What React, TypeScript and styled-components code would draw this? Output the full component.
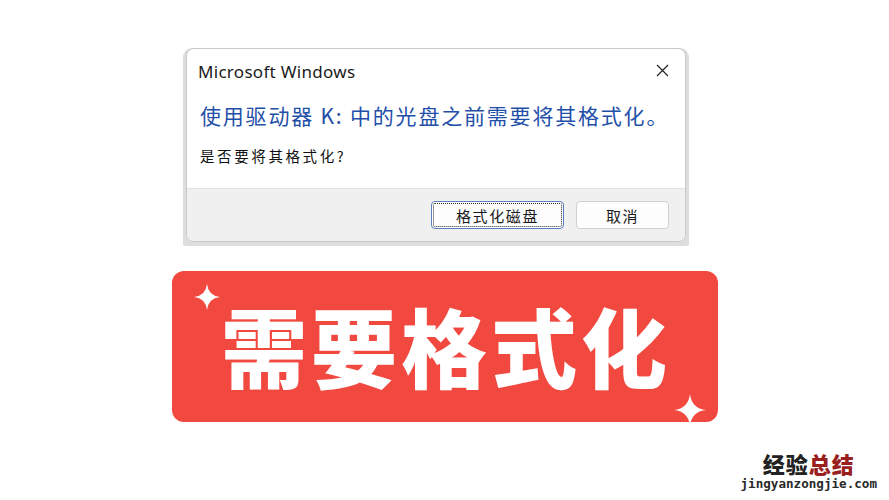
import styled, { createGlobalStyle } from "styled-components";

const GlobalStyle = createGlobalStyle`
  html, body {
    margin: 0;
    padding: 0;
    background: #ffffff;
  }
`;

const CJK = `"Noto Sans CJK SC", "Noto Sans", sans-serif`;

const StyledPage = styled.div`
  position: relative;
  width: 889px;
  height: 500px;
  overflow: hidden;
  display: flex;
  flex-direction: column;
  align-items: flex-start;
  padding-top: 48px;
  box-sizing: border-box;
`;

const StyledShot = styled.div`
  margin-left: 183px;
  padding: 0 3px 4px 3px;
  background: #dedede;
  border-radius: 9px 9px 2px 2px;
`;

const StyledDialog = styled.div`
  width: 498px;
  height: 192px;
  display: flex;
  flex-direction: column;
  background: #ffffff;
  border: 1px solid #c9c9c9;
  border-radius: 8px;
  overflow: hidden;
`;

const StyledTitleBar = styled.div`
  display: flex;
  align-items: center;
  justify-content: space-between;
  height: 42px;
  padding: 0 16px 0 11px;
`;

const StyledTitle = styled.span`
  font-family: "Noto Sans", "Open Sans", sans-serif;
  font-size: 17px;
  letter-spacing: 0.3px;
  color: #1b1b1b;
  padding-top: 2px;
`;

const StyledBody = styled.div`
  flex: 1;
  display: flex;
  flex-direction: column;
  padding: 0 0 0 13px;
`;

const StyledHeadline = styled.div`
  margin-top: 11px;
  font-family: ${CJK};
  font-size: 21px;
  letter-spacing: 1.8px;
  white-space: nowrap;
  color: #1f4fa8;
  line-height: 26px;
`;

const StyledQuestion = styled.div`
  margin-top: 18px;
  font-family: ${CJK};
  font-size: 14.5px;
  letter-spacing: 2.6px;
  color: #111111;
  line-height: 20px;
`;

const StyledFooter = styled.div`
  height: 53px;
  display: flex;
  align-items: center;
  justify-content: flex-end;
  gap: 12px;
  padding-right: 16px;
  background: #f0f0f0;
  border-top: 1px solid #e3e3e3;
  box-sizing: border-box;
`;

const StyledButton = styled.button<{ $focused?: boolean; $width: number }>`
  width: ${(p) => p.$width}px;
  height: 28px;
  box-sizing: border-box;
  font-family: ${CJK};
  font-size: 15px;
  letter-spacing: 1.6px;
  color: #1a1a1a;
  background: #fdfdfd;
  border: 1px solid ${(p) => (p.$focused ? "#5b7fc0" : "#d0d0d0")};
  border-radius: 4px;
  outline: ${(p) => (p.$focused ? "1px dotted #333" : "none")};
  outline-offset: -3px;
  padding: 0;
`;

const StyledBanner = styled.div`
  position: relative;
  margin: 25px 0 0 172px;
  width: 546px;
  height: 151px;
  display: flex;
  align-items: center;
  justify-content: center;
  background: #f1493f;
  border-radius: 12px;
`;

const StyledBannerText = styled.span`
  font-family: ${CJK};
  font-weight: 900;
  font-size: 86px;
  letter-spacing: 4px;
  color: #ffffff;
  line-height: 1;
  padding-left: 2px;
  margin-top: -4px;
`;

const StyledSparkle = styled.svg<{ $top: number; $left: number; $size: number }>`
  position: absolute;
  top: ${(p) => p.$top}px;
  left: ${(p) => p.$left}px;
  width: ${(p) => p.$size}px;
  height: ${(p) => p.$size}px;
`;

const StyledMark = styled.div`
  position: absolute;
  right: 12px;
  bottom: 8px;
  display: flex;
  flex-direction: column;
  align-items: center;
`;

const StyledMarkTitle = styled.div`
  font-family: ${CJK};
  font-weight: 900;
  font-size: 22px;
  letter-spacing: 1px;
  line-height: 26px;
  color: #222222;
  span {
    color: #9a1f1f;
  }
`;

const StyledMarkUrl = styled.div`
  font-family: "DejaVu Sans Mono", "Liberation Mono", monospace;
  font-size: 12.6px;
  font-weight: 700;
  color: #2a2a2a;
  line-height: 16px;
`;

const Sparkle = ({ top, left, size }: { top: number; left: number; size: number }) => (
  <StyledSparkle $top={top} $left={left} $size={size} viewBox="0 0 24 24">
    <path d="M12 0 Q13.2 10.8 24 12 Q13.2 13.2 12 24 Q10.8 13.2 0 12 Q10.8 10.8 12 0Z" fill="#ffffff" />
  </StyledSparkle>
);

const CloseIcon = () => (
  <svg width="13" height="13" viewBox="0 0 13 13">
    <path d="M1 1 L12 12 M12 1 L1 12" stroke="#222" strokeWidth="1.2" fill="none" />
  </svg>
);

const App = () => (
  <StyledPage>
    <GlobalStyle />
    <StyledShot>
      <StyledDialog>
        <StyledTitleBar>
          <StyledTitle>Microsoft Windows</StyledTitle>
          <CloseIcon />
        </StyledTitleBar>
        <StyledBody>
          <StyledHeadline>使用驱动器 K: 中的光盘之前需要将其格式化。</StyledHeadline>
          <StyledQuestion>是否要将其格式化?</StyledQuestion>
        </StyledBody>
        <StyledFooter>
          <StyledButton $focused $width={133}>格式化磁盘</StyledButton>
          <StyledButton $width={93}>取消</StyledButton>
        </StyledFooter>
      </StyledDialog>
    </StyledShot>
    <StyledBanner>
      <Sparkle top={13} left={22} size={26} />
      <StyledBannerText>需要格式化</StyledBannerText>
      <Sparkle top={123} left={502} size={32} />
    </StyledBanner>
    <StyledMark>
      <StyledMarkTitle>
        经验<span>总结</span>
      </StyledMarkTitle>
      <StyledMarkUrl>jingyanzongjie.com</StyledMarkUrl>
    </StyledMark>
  </StyledPage>
);

export default App;
